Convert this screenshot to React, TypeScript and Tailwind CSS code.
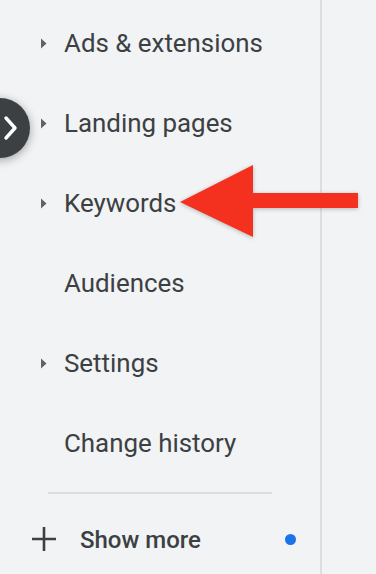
type Item = { label: string; expandable: boolean };

const items: Item[] = [
  { label: 'Ads & extensions', expandable: true },
  { label: 'Landing pages', expandable: true },
  { label: 'Keywords', expandable: true },
  { label: 'Audiences', expandable: false },
  { label: 'Settings', expandable: true },
  { label: 'Change history', expandable: false },
];

const Caret = () => (
  <svg width="7" height="11" viewBox="0 0 7 11" className="shrink-0">
    <path d="M1 0.5 L6.5 5.5 L1 10.5 Z" fill="#5f6368" />
  </svg>
);

export default function App() {
  return (
    <div
      className="relative flex w-[376px] h-[574px] overflow-hidden bg-[#f1f3f4] text-[#3c4043]"
      style={{ fontFamily: 'Roboto, "Noto Sans", Arial, sans-serif' }}
    >
      {/* Nav column */}
      <div className="w-[320px] shrink-0 pt-[3px] flex flex-col">
        {items.map((item) => (
          <div key={item.label} className="h-[80px] flex items-center">
            <div className="w-[64px] pl-[40px] flex items-center">
              {item.expandable && <Caret />}
            </div>
            <span className="text-[25.9px] leading-none pt-[2px]">{item.label}</span>
          </div>
        ))}
        <div className="mx-[48px] mt-[9px] h-[2px] bg-[#dadce0]" />
        <div className="mt-[23px] h-[44px] flex items-center pl-[32px] pr-[24px]">
          <svg width="24" height="24" viewBox="0 0 24 24" className="shrink-0">
            <path d="M12 0 V24 M0 12 H24" stroke="#3c4043" strokeWidth="2.6" fill="none" />
          </svg>
          <span className="ml-[24px] text-[24px] font-medium leading-none pt-[1px]">Show more</span>
          <span className="ml-auto w-[11px] h-[11px] rounded-full bg-[#1a73e8]" />
        </div>
      </div>
      <div className="w-[2px] shrink-0 bg-[#dcdfe2]" />
      <div className="flex-1" />

      {/* Collapse toggle */}
      <div className="absolute left-[-30px] top-[98px] w-[60px] h-[60px] rounded-full bg-[#3c4043] shadow-[0_2px_10px_rgba(0,0,0,0.35)] flex items-center justify-end">
        <svg width="30" height="30" viewBox="0 0 30 30">
          <path d="M6 5 L15 15 L6 25" fill="none" stroke="#ffffff" strokeWidth="3.4" strokeLinecap="round" strokeLinejoin="round" />
        </svg>
      </div>

      {/* Annotation arrow */}
      <svg className="absolute left-[176px] top-[160px]" width="190" height="84" viewBox="0 0 190 84">
        <path
          d="M4 42 L77 5 L77 33 L182 33 L182 48 L77 48 L77 77 Z"
          fill="#f4311f"
          style={{ filter: 'drop-shadow(0 1px 2px rgba(0,0,0,0.25))' }}
        />
      </svg>
    </div>
  );
}
